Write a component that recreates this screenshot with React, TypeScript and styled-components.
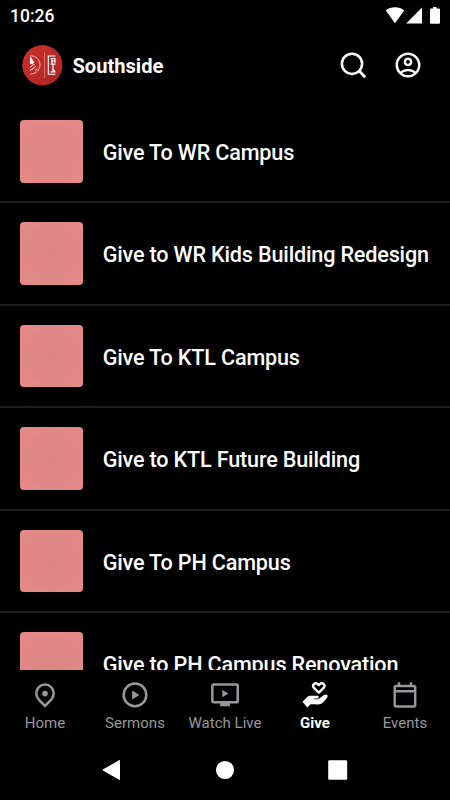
import React from "react";
import styled, { createGlobalStyle } from "styled-components";
import { MdOutlineAccountCircle } from "react-icons/md";

const GlobalStyle = createGlobalStyle`
  * { box-sizing: border-box; }
  body { margin: 0; background: #000; overflow: hidden; }
`;

const Screen = styled.div`
  width: 450px;
  height: 800px;
  display: flex;
  flex-direction: column;
  overflow: hidden;
  background: #000;
  color: #fff;
  font-family: Roboto, "Liberation Sans", sans-serif;

  svg { display: block; flex: none; }
`;

const StatusBar = styled.div`
  height: 30px;
  flex: none;
  display: flex;
  align-items: center;
  justify-content: space-between;
  padding: 1px 10px 0 10px;
`;

const Clock = styled.span`
  font-size: 17.5px;
  font-weight: 500;
  line-height: 30px;
`;

const Header = styled.header`
  height: 69px;
  flex: none;
  display: flex;
  align-items: center;
  padding: 1px 27.5px 0 22px;
`;

const ChurchName = styled.h1`
  flex: 1;
  margin: 2px 0 0 9.5px;
  font-size: 20.1px;
  font-weight: 700;
  line-height: 28px;
`;

const HeaderActions = styled.div`
  display: flex;
  align-items: center;
  gap: 26px;
`;

const CampusList = styled.main`
  flex: 1;
  min-height: 0;
  overflow: hidden;
`;

const CampusRow = styled.div`
  height: 102.45px;
  display: flex;
  align-items: center;
  gap: 20px;
  padding: 2px 0 0 20px;

  & + & {
    box-shadow: inset 0 2px 0 #1d1d1d;
  }
`;

const Thumbnail = styled.div`
  width: 62.7px;
  height: 62.7px;
  flex: none;
  border-radius: 4px;
  background: radial-gradient(circle, #dd8583, #e48b88);
`;

const CampusTitle = styled.span`
  padding-top: 3.5px;
  font-size: 21.6px;
  font-weight: 500;
  line-height: 30px;
  letter-spacing: -0.17px;
  white-space: nowrap;
`;

const TabBar = styled.nav`
  height: 70px;
  flex: none;
  display: grid;
  grid-template-columns: repeat(5, 90px);
`;

const Tab = styled.div<{ $active?: boolean }>`
  display: flex;
  flex-direction: column;
  align-items: center;
  padding-top: 10px;
  color: ${(p) => (p.$active ? "#fff" : "#98989b")};
`;

const TabLabel = styled.span<{ $active?: boolean }>`
  margin-top: 3px;
  font-size: 15px;
  line-height: 20px;
  font-weight: ${(p) => (p.$active ? 700 : 400)};
  letter-spacing: ${(p) => (p.$active ? "0" : "0.03px")};
  white-space: nowrap;
`;

const SystemNav = styled.div`
  height: 60px;
  flex: none;
  display: grid;
  grid-template-columns: repeat(3, 112.5px);
  justify-content: center;
  justify-items: center;
  align-items: center;
`;

const StatusIcons = () => (
  <svg width="55" height="20" viewBox="0 0 55 20" fill="#fff">
    <path d="M.8 4.400C5.600.2 14.400.2 19.200 4.400L10 17.300Z" />
    <path d="M37 1.500V17.500H21.200Z" />
    <path d="M48 1h3.500v1.500h2.500q1 0 1 1v13.200q0 1-1 1h-8q-1 0-1-1V3.500q0-1 1-1h2Z" />
  </svg>
);

const Logo = () => (
  <svg width="41" height="41" viewBox="0 0 41 41" fill="none">
    <defs>
      <linearGradient id="logoRed" x1="0" y1="0" x2="1" y2="1">
        <stop stopColor="#cc312c" />
        <stop offset="1" stopColor="#ab2421" />
      </linearGradient>
    </defs>
    <circle cx="20.400" cy="20.200" r="20.100" fill="url(#logoRed)" />
    <path d="M8.500 10.700C14 11 18 15 18 20S14 28.800 8.500 29.100" stroke="#efc4c1" strokeWidth=".9" />
    <path d="M8 10.900 12.300 17.300 10.600 19 8 18.700Z" fill="#fff" />
    <path d="M8.500 22.500Q9.500 19.500 12.500 19.500M10.500 24 14 21.200M8 25.500 11 23.500M13 25.500 15.500 24" stroke="#fff" strokeWidth=".9" />
    <path d="M22.500 7.500V33" stroke="#e08a85" strokeWidth=".8" />
    <path d="M33.400 11H26.300V29.200H33.400" stroke="#fff" strokeWidth="1.100" />
    <path d="M28.500 13.500H33.500M30 13.500V18.400M33 13.500V18M29 16H33.500M28.500 19.200H33.500M31 19.200V27M28.500 26.900H33.500M30 24.200 33 26" stroke="#fff" strokeWidth="1.200" />
  </svg>
);

const SearchIcon = () => (
  <svg width="27" height="27" viewBox="0 0 27 27" fill="none" stroke="#fff" strokeWidth="2.500">
    <circle cx="12" cy="11.800" r="10.100" />
    <path d="m19 18.800 6.200 6.500" strokeWidth="2.800" />
  </svg>
);

const HomeIcon = () => (
  <svg width="30" height="30" viewBox="0 0 30 30" fill="none" stroke="currentColor" strokeWidth="2.500">
    <path d="M15 26 9 20C7.300 18.200 6.300 16 6.300 13.200a8.700 8.700 0 0 1 17.400 0c0 2.800-1 5-2.700 6.800Z" />
    <circle cx="15" cy="13.600" r="2.800" fill="currentColor" stroke="none" />
  </svg>
);

const SermonsIcon = () => (
  <svg width="30" height="30" viewBox="0 0 30 30" fill="none" stroke="currentColor" strokeWidth="2.500">
    <circle cx="15" cy="14.900" r="11.300" />
    <path d="M12.200 10.500v9l7.200-4.500Z" fill="currentColor" stroke="none" />
  </svg>
);

const WatchIcon = () => (
  <svg width="30" height="30" viewBox="0 0 30 30" fill="none" stroke="currentColor" strokeWidth="2.500">
    <rect x="2.350" y="4.400" width="25.400" height="17.900" rx="1.400" />
    <path d="M10.200 22.500h9.700v3.800h-9.700ZM12.300 10v7.200l6.200-3.600Z" fill="currentColor" stroke="none" />
  </svg>
);

const GiveIcon = () => (
  <svg width="30" height="30" viewBox="0 0 30 30" fill="none">
    <path d="M18.800 12.600 14 7.900C11.400 5 15 2.100 17.500 3.900L18.800 5.100 20.100 3.900C22.600 2.100 26.200 5 23.600 7.900Z" stroke="#fff" strokeWidth="2.300" strokeLinejoin="round" />
    <path d="M2.500 21.700 7.200 17C8.200 16 9 15.700 10.200 15.700H17C19.300 15.700 19.300 18.500 17 18.500H13.800V19.300H18.200L24 15.100C26 13.700 28.500 14.700 27.400 16.900C26.300 18.900 22.500 23.200 20.500 24C18.500 24.800 13 24.200 10.500 24.300L7.300 27.500Z" fill="#fff" />
  </svg>
);

const EventsIcon = () => (
  <svg width="30" height="30" viewBox="0 0 30 30" fill="none" stroke="currentColor" strokeWidth="2.400">
    <rect x="4.700" y="6" width="20.500" height="20.500" rx="1.500" />
    <path d="M4.700 11.300h20.500M9 2.200v4M21 2.200v4" />
  </svg>
);

const BackIcon = () => (
  <svg width="23" height="22" viewBox="0 0 23 22" fill="#fff" stroke="#fff" strokeLinejoin="round">
    <path d="M18.500 1.500v19L1.900 11Z" />
  </svg>
);

const HomeButtonIcon = () => (
  <svg width="20" height="20" viewBox="0 0 20 20" fill="#fff">
    <circle cx="10" cy="10" r="9.100" />
  </svg>
);

const RecentsIcon = () => (
  <svg width="20" height="20" viewBox="0 0 20 20" fill="#fff">
    <rect x=".2" y=".2" width="19" height="19.500" rx="1.200" />
  </svg>
);

const campuses = [
  "Give To WR Campus",
  "Give to WR Kids Building Redesign",
  "Give To KTL Campus",
  "Give to KTL Future Building",
  "Give To PH Campus",
  "Give to PH Campus Renovation",
];

const tabs = [
  { label: "Home", Icon: HomeIcon },
  { label: "Sermons", Icon: SermonsIcon },
  { label: "Watch Live", Icon: WatchIcon },
  { label: "Give", Icon: GiveIcon, active: true },
  { label: "Events", Icon: EventsIcon },
];

export default function App() {
  return (
    <>
      <GlobalStyle />
      <Screen>
        <StatusBar>
          <Clock>10:26</Clock>
          <StatusIcons />
        </StatusBar>
        <Header>
          <Logo />
          <ChurchName>Southside</ChurchName>
          <HeaderActions>
            <SearchIcon />
            <MdOutlineAccountCircle size={30} />
          </HeaderActions>
        </Header>
        <CampusList>
          {campuses.map((name) => (
            <CampusRow key={name}>
              <Thumbnail />
              <CampusTitle>{name}</CampusTitle>
            </CampusRow>
          ))}
        </CampusList>
        <TabBar>
          {tabs.map(({ label, Icon, active }) => (
            <Tab key={label} $active={active}>
              <Icon />
              <TabLabel $active={active}>{label}</TabLabel>
            </Tab>
          ))}
        </TabBar>
        <SystemNav>
          <BackIcon />
          <HomeButtonIcon />
          <RecentsIcon />
        </SystemNav>
      </Screen>
    </>
  );
}
